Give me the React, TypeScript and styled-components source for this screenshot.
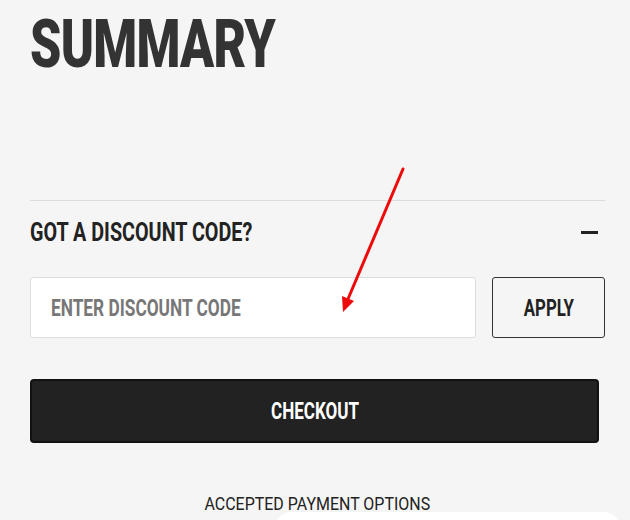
import React from "react";
import styled, { createGlobalStyle } from "styled-components";

const Global = createGlobalStyle`
  html, body { margin: 0; padding: 0; background: #f5f5f5; }
  body { width: 630px; height: 520px; overflow: hidden; }
`;

const font = `Roboto, "Liberation Sans", sans-serif`;

const Page = styled.div`
  position: relative;
  width: 630px;
  height: 520px;
  box-sizing: border-box;
  padding: 0 25px 0 30px;
  display: flex;
  flex-direction: column;
  font-family: ${font};
  overflow: hidden;
`;

const Squeeze = styled.span<{ $scale: number; $origin?: string }>`
  display: inline-block;
  white-space: nowrap;
  transform: scaleX(${(p) => p.$scale});
  transform-origin: ${(p) => p.$origin ?? "left"} center;
`;

const Title = styled.h1`
  margin: 12px 0 0;
  font-size: 66px;
  line-height: 66px;
  font-weight: 900;
  color: #333;
  letter-spacing: -1px;
`;

const Divider = styled.hr`
  margin: 122px 0 0;
  border: 0;
  border-top: 1px solid #dcdcdc;
  height: 0;
`;

const Header = styled.div`
  height: 62px;
  display: flex;
  align-items: center;
  justify-content: space-between;
  padding-right: 7px;
`;

const HeaderText = styled.span`
  font-size: 26px;
  font-weight: 700;
  color: #222;
`;

const Minus = styled.span`
  width: 17px;
  height: 3px;
  background: #222;
`;

const Form = styled.div`
  margin-top: 14px;
  display: flex;
  gap: 16px;
  height: 61px;
`;

const InputBox = styled.div`
  width: 447px;
  box-sizing: border-box;
  background: #fff;
  border: 1px solid #ddd;
  border-radius: 3px;
  padding: 0 20px;
  display: flex;
  align-items: center;
  font-size: 24px;
  font-weight: 700;
  color: #777;
`;

const ApplyButton = styled.button`
  width: 113px;
  box-sizing: border-box;
  background: transparent;
  border: 1px solid #333;
  border-radius: 3px;
  font-family: ${font};
  font-size: 24px;
  font-weight: 700;
  color: #222;
  padding: 0;
`;

const Checkout = styled.button`
  margin-top: 41px;
  width: 569px;
  height: 64px;
  box-sizing: border-box;
  background: #222;
  border: 2px solid #111;
  border-radius: 4px;
  font-family: ${font};
  font-size: 24px;
  font-weight: 700;
  color: #fff;
  padding: 0;
`;

const Payment = styled.div`
  margin-top: 49px;
  text-align: center;
  width: 575px;
  font-size: 19px;
  color: #222;
`;

const WhiteCard = styled.div`
  position: absolute;
  left: 275px;
  top: 512px;
  width: 345px;
  height: 40px;
  background: #fff;
  border-radius: 16px;
`;

const Arrow = styled.svg`
  position: absolute;
  left: 0;
  top: 0;
  pointer-events: none;
`;

export default function App() {
  return (
    <>
      <Global />
      <Page>
        <Title>
          <Squeeze $scale={0.76}>SUMMARY</Squeeze>
        </Title>
        <Divider />
        <Header>
          <HeaderText>
            <Squeeze $scale={0.76}>GOT A DISCOUNT CODE?</Squeeze>
          </HeaderText>
          <Minus />
        </Header>
        <Form>
          <InputBox>
            <Squeeze $scale={0.72}>ENTER DISCOUNT CODE</Squeeze>
          </InputBox>
          <ApplyButton>
            <Squeeze $scale={0.7} $origin="center">APPLY</Squeeze>
          </ApplyButton>
        </Form>
        <Checkout>
          <Squeeze $scale={0.71} $origin="center">CHECKOUT</Squeeze>
        </Checkout>
        <Payment>
          <Squeeze $scale={0.84} $origin="center">ACCEPTED PAYMENT OPTIONS</Squeeze>
        </Payment>
        <WhiteCard />
        <Arrow width="630" height="520" viewBox="0 0 630 520">
          <line x1="403" y1="169" x2="348" y2="299" stroke="#ee0a0a" strokeWidth="3" strokeLinecap="round" />
          <polygon points="343,312 342,296 354,301" fill="#ee0a0a" />
        </Arrow>
      </Page>
    </>
  );
}
